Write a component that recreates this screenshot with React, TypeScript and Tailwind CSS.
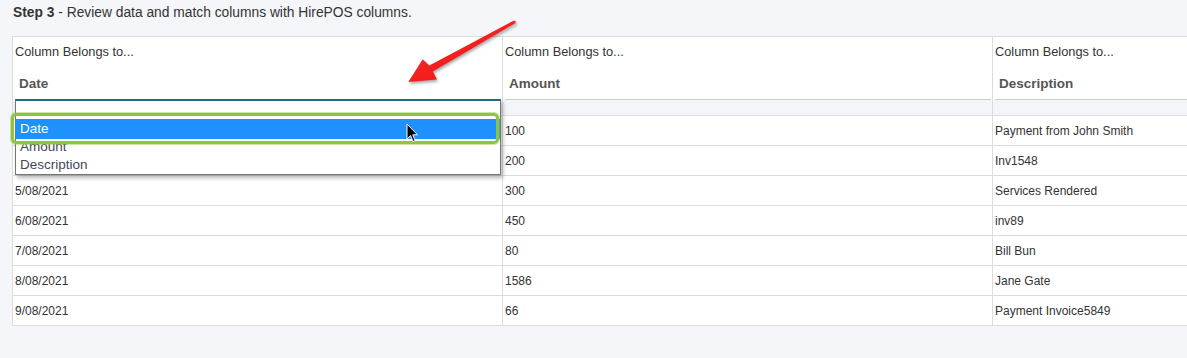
import React from "react";

const rows: [string, string, string][] = [
  ["3/08/2021", "100", "Payment from John Smith"],
  ["4/08/2021", "200", "Inv1548"],
  ["5/08/2021", "300", "Services Rendered"],
  ["6/08/2021", "450", "inv89"],
  ["7/08/2021", "80", "Bill Bun"],
  ["8/08/2021", "1586", "Jane Gate"],
  ["9/08/2021", "66", "Payment Invoice5849"],
];

const headers = ["Date", "Amount", "Description"];

export default function App() {
  return (
    <div
      className="relative w-[1187px] h-[358px] overflow-hidden bg-[#f5f6f9] text-[#333]"
      style={{ fontFamily: '"Liberation Sans", Arial, sans-serif' }}
    >
      <div className="h-[36px] pt-[5px] pl-[13px] text-[13.8px] leading-[16px] text-[#333]">
        <span className="font-bold">Step 3</span> - Review data and match columns with HirePOS columns.
      </div>

      <div className="ml-[12px] w-[1400px] border-t border-[#dcdcdc]">
        {/* header */}
        <div className="flex">
          {headers.map((h, i) => (
            <div
              key={h}
              className={`${i === 2 ? "w-[420px]" : "w-[490px]"} shrink-0 h-[63px] border-l border-[#dcdcdc] bg-white flex flex-col`}
            >
              <div className="h-[25px] pt-[7px] pl-[2px] text-[12.8px] leading-[15px] text-[#333]">
                Column Belongs to...
              </div>
              <div
                className={`ml-[2px] mr-[1px] h-[38px] pl-[4px] pt-[8px] flex items-center text-[13.5px] font-bold text-[#555] bg-white border-b ${i === 0 ? "border-[#1c6b88]" : "border-[#cccccc]"}`}
              >
                {h}
              </div>
            </div>
          ))}
        </div>
        {/* filter row */}
        <div className="flex">
          {headers.map((h, i) => (
            <div
              key={h}
              className={`${i === 2 ? "w-[420px]" : "w-[490px]"} shrink-0 h-[16px] border-l border-b border-[#dcdcdc] bg-[#f3f5f9]`}
            />
          ))}
        </div>
        {/* data rows */}
        {rows.map((r, ri) => (
          <div key={ri} className="flex">
            {r.map((c, ci) => (
              <div
                key={ci}
                className={`${ci === 2 ? "w-[420px]" : "w-[490px]"} shrink-0 h-[30px] border-l border-b border-[#dcdcdc] bg-white pl-[2px] flex items-center text-[12px] text-[#333]`}
              >
                {c}
              </div>
            ))}
          </div>
        ))}
      </div>

      {/* open select popup */}
      <div className="absolute left-[15px] top-[99px] w-[486px] bg-white border-t-2 border-t-[#1c6b88] border-x border-b border-[#767676] shadow-[2px_3px_4px_rgba(0,0,0,0.28)] text-[13.5px] text-[#3f4858]">
        <div className="h-[18px]" />
        <div className="h-[20px] bg-[#1e90ff] text-white pl-[4px] flex items-center">Date</div>
        <div className="h-[17px] pl-[4px] flex items-center">Amount</div>
        <div className="h-[18px] pl-[4px] flex items-center">Description</div>
      </div>

      {/* green highlight annotation */}
      <div className="absolute left-[11px] top-[113px] w-[488px] h-[31px] rounded-[5px] border-[3px] border-[#8cc63f] shadow-[0_0_0_1px_rgba(140,198,63,0.45)]" />

      {/* mouse cursor */}
      <svg
        className="absolute left-[406px] top-[123px]"
        width="14"
        height="21"
        viewBox="0 0 14 21"
      >
        <path
          d="M1 1 L1 16 L4.5 12.5 L7 18.5 L9.2 17.6 L6.8 11.8 L11.5 11.8 Z"
          fill="#000"
          stroke="#fff"
          strokeWidth="1"
          strokeLinejoin="round"
        />
      </svg>

      {/* red arrow annotation */}
      <svg
        className="absolute left-0 top-0 pointer-events-none"
        width="1187"
        height="358"
        viewBox="0 0 1187 358"
        style={{ filter: "drop-shadow(1px 2px 1.5px rgba(0,0,0,0.35))" }}
      >
        <defs>
          <linearGradient id="rg" x1="0" y1="0" x2="1" y2="1">
            <stop offset="0" stopColor="#ff3030" />
            <stop offset="1" stopColor="#e80f0f" />
          </linearGradient>
        </defs>
        <polygon
          points="513.5,20.7 429.3,65.5 422.7,59.3 408.3,82 437,79.5 432.8,71.5 515.1,23.3"
          fill="url(#rg)"
        />
        <circle cx="514.3" cy="22" r="1.5" fill="#ff3030" />
      </svg>
    </div>
  );
}
